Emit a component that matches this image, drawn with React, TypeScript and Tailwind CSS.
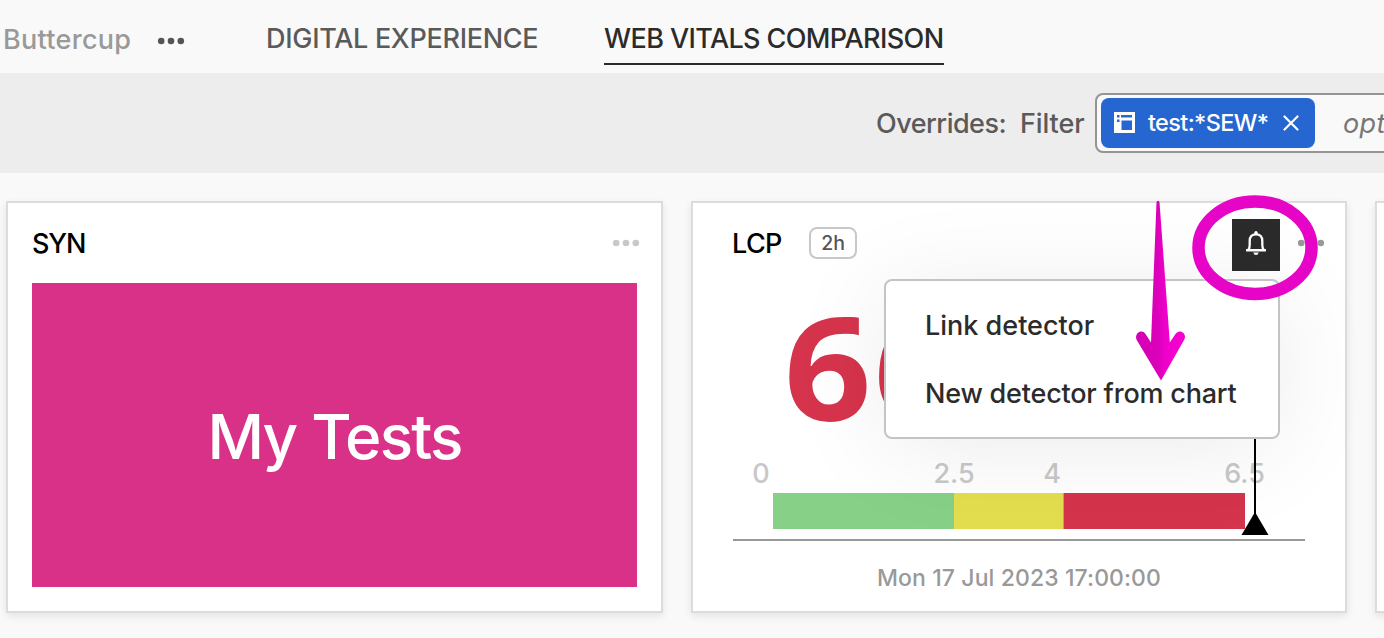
import type { ReactNode } from "react";

function Dots({ className }: { className: string }) {
  return (
    <svg viewBox="0 0 28 8" className={className} fill="currentColor">
      <circle cx="4.2" cy="4" r="3.3" />
      <circle cx="14" cy="4" r="3.3" />
      <circle cx="23.8" cy="4" r="3.3" />
    </svg>
  );
}

function Card({ children, className = "w-[656px]" }: { children?: ReactNode; className?: string }) {
  return (
    <section className={`relative h-[412px] shrink-0 border-2 border-[#dcdcdc] bg-white shadow-[0_3px_8px_rgba(0,0,0,0.09)] ${className}`}>
      {children}
    </section>
  );
}

function Gauge() {
  return (
    <svg viewBox="0 0 572 110" className="block h-[110px] w-[572px] overflow-visible">
      <g fill="#c8c8c8" fontSize="27" className="font-['Inter',sans-serif] font-[450]" textAnchor="middle">
        <text x="28" y="52">0</text>
        <text x="221" y="52">2.5</text>
        <text x="319" y="52">4</text>
        <text x="511.5" y="52">6.5</text>
      </g>
      <rect x="40" y="62" width="181" height="36" fill="#86d087" />
      <rect x="221" y="62" width="109.5" height="36" fill="#e2de4f" />
      <rect x="330.5" y="62" width="181.5" height="36" fill="#d4344c" />
      <rect x="521" y="0" width="2" height="86" fill="#000" />
      <path d="M522 81 L535.5 104 H508.5 Z" fill="#000" />
      <rect x="0" y="108" width="572" height="2" fill="#999" />
    </svg>
  );
}

export default function App() {
  return (
    <div className="relative h-[638px] w-[1384px] overflow-hidden bg-[#f9f9f9] font-['Inter',sans-serif] text-[27px] font-[450]">
      <header className="flex h-[73px] items-start pl-[3px]">
        <span className="mt-[20px] w-[153px] leading-[40px] tracking-[0.3px] text-[#999]">Buttercup</span>
        <Dots className="mt-[37px] ml-px h-2 w-7 text-[#555]" />
        <nav className="ml-[81px] flex whitespace-nowrap text-[#5a5a5a]">
          <span className="mt-[19px] w-[338px] leading-[40px] tracking-[-0.3px]">DIGITAL EXPERIENCE</span>
          <span className="mt-[19px] h-[46px] w-[340px] border-b-2 border-[#2b2b2b] leading-[40px] tracking-[-0.6px] text-[#2b2b2b]">
            WEB VITALS COMPARISON
          </span>
        </nav>
      </header>

      <div className="flex h-[100px] items-center bg-[#ededed] pl-[876px] text-[#5a5a5a]">
        <span className="w-[143px] shrink-0 pt-[2px] tracking-[-0.5px]">Overrides:</span>
        <span className="w-[76px] shrink-0 pt-[2px] pl-px tracking-[-0.1px]">Filter</span>
        <div className="flex h-[60px] w-[400px] shrink-0 items-center rounded-lg border-2 border-[#949494] bg-[#f9f9f9] pl-[4px]">
          <div className="flex h-[50px] w-[214px] items-center rounded-lg bg-[#2666d0] pl-[13px] text-white">
            <svg viewBox="0 0 21 21" className="-mt-[2px] size-[21px]">
              <path fill="currentColor" fillRule="evenodd" d="M0 0H21V21H0Z M3 3V5.500H5.500V3Z M7 3V5.500H18V3Z M3 7.500V10H5.500V7.500Z M7.500 8.500V18H18V8.500Z" />
            </svg>
            <span className="ml-[13px] w-[135px] text-[23.5px] font-medium tracking-[-0.65px]">test:*SEW*</span>
            <svg viewBox="0 0 16 16" className="size-[16px]" stroke="currentColor" strokeWidth="2.2" strokeLinecap="round">
              <path d="M1.500 1.500 14.500 14.500M14.500 1.500 1.500 14.500" />
            </svg>
          </div>
          <span className="ml-[28px] pt-[2px] italic tracking-[0.4px] text-[#777]">optional</span>
        </div>
      </div>

      <main className="flex gap-[28px] pl-[6px] pt-[28px]">
        <Card className="w-[657px]">
          <div className="flex h-[80px] items-center justify-between pl-[24px] pr-[21px]">
            <h2 className="pt-[2px] tracking-[-1.1px] text-black">SYN</h2>
            <Dots className="h-2 w-7 text-[#c8c8c8]" />
          </div>
          <div className="ml-[24px] flex h-[304px] w-[605px] items-center justify-center bg-[#da3188] pt-[3px] text-[62px] font-medium tracking-[-1.8px] text-white">
            My Tests
          </div>
        </Card>

        <Card>
          <div className="flex h-[80px] items-center pl-[39px]">
            <h2 className="w-[77px] pt-[2px] tracking-[-0.6px] text-black">LCP</h2>
            <span className="flex h-8 w-12 items-center justify-center rounded-lg border-2 border-[#c8c8c8] pt-px text-[19.5px] text-[#555]">2h</span>
            <button className="ml-[375px] mt-[4px] flex h-[52px] w-12 items-center justify-center bg-[#2b2b2b] pb-[4px] text-white">
              <svg viewBox="0 0 20 24" className="h-6 w-5">
                <path d="M2.500 18.800C3.500 17.500 3.700 16 3.700 13.500V10C3.700 5.500 6.300 3.400 10 3.400S16.300 5.500 16.300 10V13.500C16.300 16 16.500 17.500 17.500 18.800" fill="none" stroke="currentColor" strokeWidth="2.300" />
                <path d="M8.300 3.500V1.700Q8.300 0 10 0T11.700 1.700V3.500Z M0 18H20V20.500H0Z M7.300 21.500H12.700Q12.200 24 10 24T7.300 21.500Z" fill="currentColor" />
              </svg>
            </button>
            <Dots className="ml-[17px] h-2 w-7 text-[#999]" />
          </div>
          <div className="flex h-[156px] items-center pl-[91px] pt-[9px] font-['Noto_Sans',sans-serif] text-[143px] font-bold leading-[130px] text-[#d6344c]">
            <span className="flex origin-left scale-x-[1.07] gap-[2px]">
              <span>6</span>
              <span>6</span>
            </span>
          </div>
          <div className="-mt-[8px] pl-[40px]">
            <Gauge />
          </div>
          <p className="mt-[20px] text-center text-[23px] leading-[34px] tracking-[0.1px] text-[#999]">Mon 17 Jul 2023 17:00:00</p>

          <div className="absolute left-[191px] top-[76px] flex h-[160px] w-[396px] flex-col rounded-lg border-2 border-[#c4c4c4] bg-white pl-[39px] pt-[11px] leading-[68px] text-[#2b2b2b] shadow-[0_10px_100px_rgba(0,0,0,0.08)]">
            <span>Link detector</span>
            <span className="tracking-[-0.2px]">New detector from chart</span>
          </div>
        </Card>

        <Card />
      </main>

      <svg viewBox="0 0 200 200" className="absolute left-[1130px] top-[190px] size-[200px]">
        <defs>
          <linearGradient id="arrow" x1="0" x2="1" y1="0" y2="0">
            <stop offset="0" stopColor="#d400b4" />
            <stop offset="0.45" stopColor="#dc00ba" />
            <stop offset="0.6" stopColor="#f000cb" />
            <stop offset="1" stopColor="#f500d0" />
          </linearGradient>
        </defs>
        <path
          d="M26.500 12Q28 9.500 29.500 12L39.800 152.500 45.300 144.200C49.500 138 57.500 143.500 54.200 149.800L31 190.500 7 150.500C3.300 144 11.500 138 15.700 144.200L21 152.500Z"
          fill="url(#arrow)"
        />
        <ellipse cx="125" cy="57.700" rx="56.500" ry="46.300" fill="none" stroke="#e604c6" strokeWidth="12.500" />
      </svg>
    </div>
  );
}
